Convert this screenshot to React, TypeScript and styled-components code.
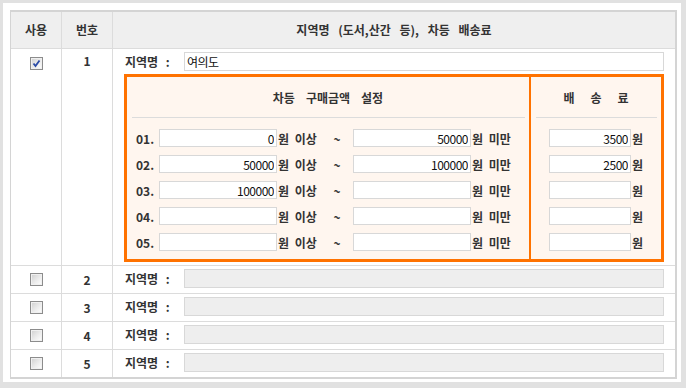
import React from "react";
import styled, { createGlobalStyle } from "styled-components";

const GlobalStyle = createGlobalStyle`
  html, body {
    margin: 0;
    padding: 0;
    background: #fff;
  }
  body {
    font-family: "Noto Sans CJK KR", "Noto Sans", sans-serif;
    font-size: 12px;
    color: #333;
  }
  * {
    box-sizing: border-box;
  }
`;

const Frame = styled.div`
  width: 686px;
  height: 388px;
  border-style: solid;
  border-color: #e1e1e1;
  border-width: 3px 5px 6px 3px;
  padding: 7px 4px 3px 7px;
  background: #fff;
`;

const Table = styled.div`
  border-style: solid;
  border-color: #d4d4d4;
  border-width: 2px 2px 2px 1px;
`;

const Row = styled.div<{ $height: number; $head?: boolean; $last?: boolean }>`
  display: grid;
  grid-template-columns: 51px 51px 1fr;
  height: ${(p) => p.$height}px;
  border-bottom: ${(p) => (p.$last ? "none" : "1px solid #dcdcdc")};
  background: ${(p) => (p.$head ? "#efefef" : "#fff")};
`;

const Cell = styled.div<{ $top?: number }>`
  display: flex;
  justify-content: center;
  align-items: ${(p) => (p.$top !== undefined ? "flex-start" : "center")};
  padding-top: ${(p) => p.$top ?? 0}px;
  border-right: 1px solid #dcdcdc;
  font-weight: bold;
  line-height: 18px;
  &:last-child {
    border-right: none;
  }
`;

const HeadTitle = styled.span`
  word-spacing: 6px;
`;

const ContentCell = styled.div<{ $open?: boolean }>`
  display: flex;
  flex-direction: column;
  justify-content: ${(p) => (p.$open ? "flex-start" : "center")};
  padding: ${(p) => (p.$open ? "3px 11px 0" : "0 11px")};
`;

const NameLine = styled.div`
  display: flex;
  align-items: center;
  height: 19px;
  margin-bottom: 3px;
`;

const NameLabel = styled.span`
  width: 60px;
  padding-left: 1px;
  font-weight: bold;
  word-spacing: 5px;
`;

const TextBox = styled.input<{ $disabled?: boolean }>`
  height: ${(p) => (p.$disabled ? 19 : 18)}px;
  margin: 0;
  padding: 0 2px;
  border: 1px solid #d8d8d8;
  border-radius: 0;
  outline: none;
  background: ${(p) => (p.$disabled ? "#eeeeee" : "#fff")};
  font-family: "Noto Sans CJK KR", "Noto Sans", sans-serif;
  font-size: 12px;
  letter-spacing: -0.5px;
  color: #111;
`;

const NameInput = styled(TextBox)`
  flex: 1;
  height: 19px;
`;

const AmountInput = styled(TextBox)<{ $w: number }>`
  width: ${(p) => p.$w}px;
  text-align: right;
`;

const RateBox = styled.div`
  display: flex;
  height: 188px;
  border: 3px solid #ff7200;
  background: #fff6ef;
`;

const Section = styled.div<{ $w?: number }>`
  display: flex;
  flex-direction: column;
  ${(p) => (p.$w ? `width: ${p.$w}px; border-right: 2px solid #ff7200;` : "flex: 1;")}
`;

const SectionHead = styled.div<{ $gap: number }>`
  display: flex;
  justify-content: center;
  align-items: center;
  gap: ${(p) => p.$gap}px;
  height: 40px;
  font-weight: bold;
`;

const Rule = styled.div`
  height: 1px;
  margin: 0 4px 0 5px;
  background: #dcdcdc;
`;

const RateRows = styled.div`
  padding-top: 7px;
`;

const RateRow = styled.div<{ $center?: boolean }>`
  display: flex;
  align-items: center;
  justify-content: ${(p) => (p.$center ? "center" : "flex-start")};
  height: 26px;
  padding-left: ${(p) => (p.$center ? 0 : 9)}px;
`;

const StepNo = styled.span`
  width: 23px;
  font-weight: bold;
`;

const Unit = styled.span<{ $w?: number }>`
  width: ${(p) => (p.$w ? `${p.$w}px` : "auto")};
  padding-left: 1px;
  font-weight: bold;
  word-spacing: 3px;
  white-space: nowrap;
`;

const Tilde = styled.span`
  width: 32px;
  text-align: center;
  font-weight: bold;
`;

const Check = styled.span`
  display: inline-flex;
  align-items: center;
  justify-content: center;
  width: 13px;
  height: 13px;
  border: 1px solid #8c8c8c;
  background: linear-gradient(135deg, #cfcfcf 0%, #ececec 55%, #ffffff 100%);
  box-shadow: inset 0 0 0 1px #f0f0f0;
`;

const CheckBox = ({ checked }: { checked?: boolean }) => (
  <Check>
    {checked && (
      <svg width="9" height="9" viewBox="0 0 9 9">
        <path d="M1.5 4.5 L3.5 7 L7.5 1.5" fill="none" stroke="#2a4aa6" strokeWidth="1.8" />
      </svg>
    )}
  </Check>
);

const steps = [
  { from: "0", to: "50000", fee: "3500" },
  { from: "50000", to: "100000", fee: "2500" },
  { from: "100000", to: "", fee: "" },
  { from: "", to: "", fee: "" },
  { from: "", to: "", fee: "" },
];

export default function App() {
  return (
    <>
      <GlobalStyle />
      <Frame>
        <Table>
          <Row $height={37} $head>
            <Cell>사용</Cell>
            <Cell>번호</Cell>
            <Cell>
              <HeadTitle>지역명 (도서,산간 등), 차등 배송료</HeadTitle>
            </Cell>
          </Row>
          <Row $height={217}>
            <Cell $top={8}>
              <CheckBox checked />
            </Cell>
            <Cell $top={3}>1</Cell>
            <ContentCell $open>
              <NameLine>
                <NameLabel>지역명 :</NameLabel>
                <NameInput readOnly value="여의도" />
              </NameLine>
              <RateBox>
                <Section $w={404}>
                  <SectionHead $gap={11}>
                    <span>차등</span>
                    <span>구매금액</span>
                    <span>설정</span>
                  </SectionHead>
                  <Rule />
                  <RateRows>
                    {steps.map((s, i) => (
                      <RateRow key={i}>
                        <StepNo>0{i + 1}.</StepNo>
                        <AmountInput $w={118} readOnly value={s.from} />
                        <Unit $w={44}>원 이상</Unit>
                        <Tilde>~</Tilde>
                        <AmountInput $w={118} readOnly value={s.to} />
                        <Unit>원 미만</Unit>
                      </RateRow>
                    ))}
                  </RateRows>
                </Section>
                <Section>
                  <SectionHead $gap={16}>
                    <span>배</span>
                    <span>송</span>
                    <span>료</span>
                  </SectionHead>
                  <Rule />
                  <RateRows>
                    {steps.map((s, i) => (
                      <RateRow key={i} $center>
                        <AmountInput $w={82} readOnly value={s.fee} />
                        <Unit>원</Unit>
                      </RateRow>
                    ))}
                  </RateRows>
                </Section>
              </RateBox>
            </ContentCell>
          </Row>
          {[2, 3, 4, 5].map((n) => (
            <Row key={n} $height={n === 5 ? 27 : 28} $last={n === 5}>
              <Cell>
                <CheckBox />
              </Cell>
              <Cell>{n}</Cell>
              <ContentCell>
                <NameLine>
                  <NameLabel>지역명 :</NameLabel>
                  <NameInput $disabled readOnly value="" />
                </NameLine>
              </ContentCell>
            </Row>
          ))}
        </Table>
      </Frame>
    </>
  );
}
